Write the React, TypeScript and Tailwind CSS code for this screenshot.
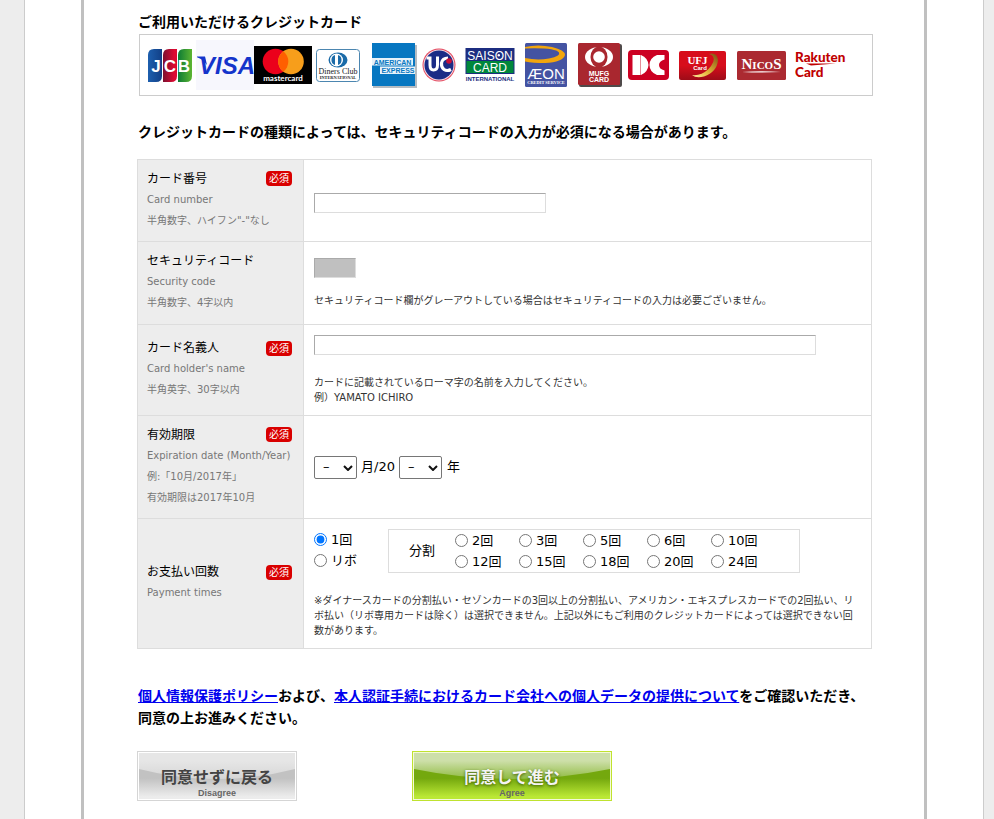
import { useState, type ReactNode } from "react";

const PRIMARY_TIMES = ["1回", "リボ"];

const SPLIT_TIMES = ["2回", "3回", "5回", "6回", "10回", "12回", "15回", "18回", "20回", "24回"];

const MONTHS = ["01", "02", "03", "04", "05", "06", "07", "08", "09", "10", "11", "12"];
const YEARS = ["17", "18", "19", "20", "21", "22", "23", "24", "25", "26"];

export default function App() {
    const [times, setTimes] = useState("1回");

    return (
        <div className="min-h-screen bg-[#ededed] pl-6 pr-[10px] font-['DejaVu_Sans','Noto_Sans_CJK_JP',sans-serif] text-black">
            <div className="border-x border-[#ccc] bg-white px-14">
                <main className="min-h-screen border-x-3 border-[#c0c0c0] pt-3 pb-4 pl-[53px] pr-[51px]">
                    <h2 className="pl-px text-sm leading-5 font-bold">ご利用いただけるクレジットカード</h2>
                    <div className="mt-0.5 ml-0.5">
                        <CardLogos />
                    </div>

                    <p className="mt-[26px] pl-px text-sm leading-5 font-bold">
                        クレジットカードの種類によっては、セキュリティコードの入力が必須になる場合があります。
                    </p>

                    <form className="mt-[17px] pr-px" onSubmit={(e) => e.preventDefault()}>
                        <table className="w-full border-collapse">
                            <tbody>
                                <Row
                                    className="h-[82px]"
                                    htmlFor="card-number"
                                    title="カード番号"
                                    required
                                    notes={["Card number", "半角数字、ハイフン\"-\"なし"]}
                                >
                                    <div className="pt-1">
                                        <TextInput id="card-number" className="w-[232px]" />
                                    </div>
                                </Row>
                                <Row
                                    className="h-[83px]"
                                    htmlFor="security-code"
                                    title="セキュリティコード"
                                    notes={["Security code", "半角数字、4字以内"]}
                                >
                                    <div className="flex flex-col gap-[15px]">
                                        <input
                                            id="security-code"
                                            type="text"
                                            disabled
                                            className="block h-5 w-[42px] border border-t-[#aaa] border-l-[#aaa] border-r-[#ddd] border-b-[#ddd] bg-[#c0c0c0] px-1 text-xs"
                                        />
                                        <p className="text-[10px] leading-[15px] text-[#333]">
                                            セキュリティコード欄がグレーアウトしている場合はセキュリティコードの入力は必要ございません。
                                        </p>
                                    </div>
                                </Row>
                                <Row
                                    className="h-[91px]"
                                    htmlFor="card-holder"
                                    title="カード名義人"
                                    required
                                    notes={["Card holder's name", "半角英字、30字以内"]}
                                >
                                    <div className="flex flex-col gap-5">
                                        <TextInput id="card-holder" className="w-full max-w-[502px]" />
                                        <p className="text-[10px] leading-[15px] text-[#333]">
                                            カードに記載されているローマ字の名前を入力してください。
                                            <br />
                                            例）YAMATO ICHIRO
                                        </p>
                                    </div>
                                </Row>
                                <Row
                                    className="h-[103px]"
                                    htmlFor="exp-month"
                                    title="有効期限"
                                    required
                                    notes={["Expiration date (Month/Year)", "例:「10月/2017年」", "有効期限は2017年10月"]}
                                >
                                    <div className="flex items-center gap-1 text-[13px] leading-5">
                                        <DateSelect id="exp-month" label="月" options={MONTHS} />
                                        <span>月/20</span>
                                        <DateSelect id="exp-year" label="年" options={YEARS} />
                                        <span className="pl-px">年</span>
                                    </div>
                                </Row>
                                <Row className="h-[130px]" title="お支払い回数" required notes={["Payment times"]}>
                                    <div className="flex items-start gap-[31px] text-[13px]">
                                        <div className="flex w-[43px] flex-col">
                                            {PRIMARY_TIMES.map((t) => (
                                                <TimesRadio key={t} value={t} current={times} onChange={setTimes} />
                                            ))}
                                        </div>
                                        <fieldset
                                            aria-label="分割"
                                            className="flex h-11 w-[412px] items-center border border-[#ddd]"
                                        >
                                            <span className="w-[66px] pl-5 leading-5">分割</span>
                                            <div className="grid grid-cols-[repeat(5,64px)]">
                                                {SPLIT_TIMES.map((t) => (
                                                    <TimesRadio key={t} value={t} current={times} onChange={setTimes} />
                                                ))}
                                            </div>
                                        </fieldset>
                                    </div>
                                    <p className="mt-5 text-[10px] leading-[15px] text-[#333]">
                                        ※ダイナースカードの分割払い・セゾンカードの3回以上の分割払い、アメリカン・エキスプレスカードでの2回払い、リボ払い（リボ専用カードは除く）は選択できません。上記以外にもご利用のクレジットカードによっては選択できない回数があります。
                                    </p>
                                </Row>
                            </tbody>
                        </table>

                        <p className="mt-9 pl-px text-sm leading-[22px] font-bold">
                            <a href="#policy" className="text-[#00e] underline">個人情報保護ポリシー</a>
                            および、
                            <a href="#data" className="text-[#00e] underline">
                                本人認証手続におけるカード会社への個人データの提供について
                            </a>
                            をご確認いただき、同意の上お進みください。
                        </p>

                        <div className="mt-[22px] flex gap-[115px]">
                            <button
                                type="button"
                                className="relative h-[50px] w-40 border border-[#d5d5d5] bg-white p-px"
                            >
                                <Gloss id="grey" top="#e6e6e6" middle="#d6d6d6" dark="#c2c2c2" bottom="#ececec" />
                                <span className="relative flex flex-col items-center pt-3.5">
                                    <span className="text-base leading-5 font-bold text-[#444]">同意せずに戻る</span>
                                    <span className="font-['Liberation_Sans',sans-serif] text-[9px] leading-[10px] font-bold text-[#666]">
                                        Disagree
                                    </span>
                                </span>
                            </button>
                            <button
                                type="submit"
                                className="relative h-[50px] w-[200px] border border-[#bfe22f] bg-[#f4fad8] p-px"
                            >
                                <Gloss id="green" top="#cddfa9" middle="#90bb42" dark="#74a80e" bottom="#bbe835" />
                                <span className="relative flex flex-col items-center pt-3.5">
                                    <span className="text-base leading-5 font-bold text-[#f4f4f4] text-shadow-[0_1px_3px_#3d5c00]">
                                        同意して進む
                                    </span>
                                    <span className="font-['Liberation_Sans',sans-serif] text-[9px] leading-[10px] font-bold text-[#666]">
                                        Agree
                                    </span>
                                </span>
                            </button>
                        </div>
                    </form>
                </main>
            </div>
        </div>
    );
}

interface RowProps {
    title: string;
    notes: string[];
    className: string;
    htmlFor?: string;
    required?: boolean;
    children: ReactNode;
}

function Row({ title, notes, className, htmlFor, required, children }: RowProps) {
    return (
        <tr className={className}>
            <th
                scope="row"
                className="w-[166px] border border-[#ddd] bg-[#ededed] pt-1.5 pr-[11px] pb-2 pl-[9px] text-left align-middle font-normal"
            >
                <div className="flex items-center justify-between">
                    {htmlFor ? (
                        <label htmlFor={htmlFor} className="text-xs leading-5">{title}</label>
                    ) : (
                        <span className="text-xs leading-5">{title}</span>
                    )}
                    {required && (
                        <span className="h-[15px] w-[26px] rounded bg-[#d90000] text-center text-[10px] leading-[15px] text-white">
                            必須
                        </span>
                    )}
                </div>
                {notes.map((note) => (
                    <p key={note} className="text-[10px] leading-[21px] whitespace-nowrap text-[#777]">{note}</p>
                ))}
            </th>
            <td className="border border-[#ddd] px-[10px] align-middle">{children}</td>
        </tr>
    );
}

function TextInput({ id, className }: { id: string; className: string }) {
    return (
        <input
            id={id}
            type="text"
            className={`block h-5 border border-t-[#aaa] border-l-[#aaa] border-r-[#ddd] border-b-[#ddd] bg-white px-1 text-xs ${className}`}
        />
    );
}

function DateSelect({ id, label, options }: { id: string; label: string; options: string[] }) {
    return (
        <span className="relative">
            <select
                id={id}
                aria-label={label}
                className="block h-[23px] w-[43px] appearance-none rounded-[2px] border border-[#767676] bg-white pl-2 text-[13px]"
            >
                <option value="">–</option>
                {options.map((o) => (
                    <option key={o} value={o}>{o}</option>
                ))}
            </select>
            <svg className="pointer-events-none absolute top-[9px] right-1" width="10" height="6" viewBox="0 0 10 6">
                <path d="M1 1l4 4 4-4" fill="none" stroke="#111" strokeWidth="2" />
            </svg>
        </span>
    );
}

interface TimesRadioProps {
    value: string;
    current: string;
    onChange: (value: string) => void;
}

function TimesRadio({ value, current, onChange }: TimesRadioProps) {
    return (
        <label className="flex items-center gap-1 leading-[21px] whitespace-nowrap">
            <input
                type="radio"
                name="times"
                value={value}
                checked={current === value}
                onChange={() => onChange(value)}
                className="size-[13px]"
            />
            {value}
        </label>
    );
}

interface GlossProps {
    id: string;
    top: string;
    middle: string;
    dark: string;
    bottom: string;
}

function Gloss({ id, top, middle, dark, bottom }: GlossProps) {
    return (
        <svg className="absolute inset-px h-[46px] w-[calc(100%-2px)]" viewBox="0 0 196 46" preserveAspectRatio="none">
            <defs>
                <linearGradient id={`${id}-base`} x1="0" y1="0" x2="0" y2="1">
                    <stop offset="0.4" stopColor={dark} />
                    <stop offset="0.55" stopColor={dark} />
                    <stop offset="0.95" stopColor={bottom} />
                </linearGradient>
                <linearGradient id={`${id}-shine`} x1="0" y1="0" x2="0" y2="1">
                    <stop offset="0" stopColor={top} />
                    <stop offset="0.3" stopColor={top} />
                    <stop offset="1" stopColor={middle} />
                </linearGradient>
            </defs>
            <rect width="196" height="46" fill={`url(#${id}-base)`} />
            <path d="M0 0H196V16Q98 36 0 16Z" fill={`url(#${id}-shine)`} />
        </svg>
    );
}

function CardLogos() {
    return (
        <div className="flex h-[62px] items-center overflow-hidden border border-[#ccc] pl-2">
            {/* JCB */}
            <svg role="img" aria-label="JCB" className="shrink-0" width="44" height="36" viewBox="0 -2 44 36">
                <defs>
                    <linearGradient id="jcb-b"><stop offset="0" stopColor="#1d5fae" /><stop offset="1" stopColor="#123f86" /></linearGradient>
                    <linearGradient id="jcb-r"><stop offset="0" stopColor="#7c1030" /><stop offset="0.8" stopColor="#dc0a31" /></linearGradient>
                    <linearGradient id="jcb-g"><stop offset="0" stopColor="#0d7b35" /><stop offset="1" stopColor="#5cb531" /></linearGradient>
                </defs>
                <path d="M6 0H14V27Q14 33 8 33H0V6Q0 0 6 0Z" fill="url(#jcb-b)" />
                <path d="M21 0H29V27Q29 33 23 33H15V6Q15 0 21 0Z" fill="url(#jcb-r)" />
                <path d="M36 0H44V27Q44 33 38 33H30V6Q30 0 36 0Z" fill="url(#jcb-g)" />
                <g fontFamily="Liberation Sans" fontWeight="700" fontSize="17" fill="#fff" textAnchor="middle">
                    <text x="8" y="23">J</text>
                    <text x="22" y="23">C</text>
                    <text x="36" y="23">B</text>
                </g>
            </svg>
            {/* Visa */}
            <svg role="img" aria-label="VISA" className="ml-1 shrink-0" width="58" height="50" viewBox="0 0 58 50">
                <rect width="58" height="50" fill="#f7f7fd" />
                <text x="3" y="34" fontFamily="Liberation Sans" fontWeight="700" fontStyle="italic" fontSize="24" fill="#1434cb">VISA</text>
                <path d="M1 16.500H9L11 25Q7 19 1 17.200Z" fill="#1434cb" />
            </svg>
            {/* mastercard */}
            <svg role="img" aria-label="mastercard" className="shrink-0" width="58" height="38" viewBox="0 0 58 38">
                <rect width="58" height="38" fill="#000" />
                <circle cx="21.500" cy="15.500" r="12.800" fill="#eb001b" />
                <circle cx="37" cy="15.500" r="12.800" fill="#f79e1b" />
                <path d="M29.250 5.300A12.800 12.800 0 0 1 29.250 25.700A12.800 12.800 0 0 1 29.250 5.300Z" fill="#ff5f00" />
                <text x="29" y="35" textAnchor="middle" fontFamily="Lato" fontWeight="700" fontSize="8" fill="#fff">mastercard</text>
            </svg>
            {/* Diners Club */}
            <svg role="img" aria-label="Diners Club International" className="ml-1 shrink-0" width="44" height="33" viewBox="0 0 44 33">
                <rect x="0.500" y="0.500" width="43" height="32" rx="3" fill="#fff" stroke="#4c86b0" />
                <ellipse cx="22" cy="11" rx="9.500" ry="7.500" fill="#1b6ba8" />
                <circle cx="20.500" cy="11" r="6.500" fill="#fff" />
                <path d="M19 6A5.300 5.300 0 0 0 19 16ZM22 6A5.300 5.300 0 0 1 22 16Z" fill="#1b6ba8" />
                <text x="22" y="24.500" textAnchor="middle" fontFamily="Liberation Serif" fontSize="8" fill="#222">Diners Club</text>
                <text x="22" y="29.500" textAnchor="middle" fontFamily="Liberation Serif" fontWeight="700" fontSize="4.300" fill="#222">INTERNATIONAL</text>
            </svg>
            {/* American Express */}
            <svg role="img" aria-label="American Express" className="ml-[11px] shrink-0" width="46" height="45" viewBox="0 0 46 45">
                <rect x="2" y="2" width="44" height="43" fill="#b5bcc2" />
                <rect x="1" y="0" width="43" height="43" fill="#0777c1" />
                <rect x="1" y="15" width="41" height="7.500" fill="#e6f2fa" />
                <rect x="9" y="23.500" width="35" height="7.500" fill="#e6f2fa" />
                <text x="21.500" y="21.500" textAnchor="middle" fontFamily="Liberation Sans" fontWeight="700" fontSize="7" fill="#0777c1">AMERICAN</text>
                <text x="27" y="30" textAnchor="middle" fontFamily="Liberation Sans" fontWeight="700" fontSize="7" fill="#0777c1">EXPRESS</text>
            </svg>
            {/* UC */}
            <svg role="img" aria-label="UC" className="ml-[5px] shrink-0" width="34" height="34" viewBox="0 0 34 34">
                <circle cx="17" cy="17" r="16.500" fill="#e4475c" />
                <circle cx="17" cy="17" r="15.500" fill="#f3dbe4" />
                <circle cx="17" cy="17" r="14.500" fill="#1b2c86" />
                <path d="M4.500 10H8V17Q8 22 11.500 22Q15.500 22 15.500 17V8.500" fill="none" stroke="#fff" strokeWidth="3" />
                <path d="M29 21.500Q25 23.500 22 21.500Q19 19.500 19.500 15Q20.500 10 26 10" fill="none" stroke="#fff" strokeWidth="3.200" />
                <circle cx="27" cy="13" r="2.800" fill="#c8103a" />
            </svg>
            {/* Saison */}
            <svg role="img" aria-label="SAISON CARD INTERNATIONAL" className="ml-[9px] shrink-0" width="50" height="34" viewBox="0 0 50 34">
                <rect x="0.500" width="49" height="26" fill="#1c2d80" />
                <rect x="1.500" y="13" width="47" height="12" fill="#00873c" />
                <text x="25" y="11.500" textAnchor="middle" fontFamily="Liberation Sans" fontSize="12" fill="#fff">SAISON</text>
                <circle cx="33.800" cy="7.200" r="1.200" fill="#fff" />
                <text x="25" y="23.500" textAnchor="middle" fontFamily="Liberation Sans" fontSize="12" fill="#fff">CARD</text>
                <text x="25" y="33" textAnchor="middle" fontFamily="Liberation Sans" fontWeight="700" fontSize="6" fill="#1c2d80">INTERNATIONAL</text>
            </svg>
            {/* AEON */}
            <svg role="img" aria-label="AEON CREDIT SERVICE" className="ml-[10px] shrink-0" width="42" height="44" viewBox="0 0 42 44">
                <rect width="42" height="44" rx="1.500" fill="#4453a2" />
                <path d="M0 4Q13 1 27 4Q40 7 40 12Q38 19 20 20Q8 20 0 18.500V15Q12 17.500 24 15.500Q36 13 34 9.500Q30 4.500 0 5.500Z" fill="#f2a60d" />
                <text x="21" y="35.500" textAnchor="middle" fontFamily="Liberation Sans" fontSize="15" fill="#fff">ÆON</text>
                <text x="21" y="41" textAnchor="middle" fontFamily="Liberation Serif" fontWeight="700" fontSize="4.400" fill="#fff">CREDIT SERVICE</text>
            </svg>
            {/* MUFG */}
            <svg role="img" aria-label="MUFG CARD" className="ml-[11px] shrink-0" width="44" height="44" viewBox="0 0 44 44">
                <rect x="1" y="1" width="43" height="43" rx="2" fill="#4f4a4a" />
                <rect width="42" height="42" rx="1.500" fill="#a9272f" />
                <ellipse cx="21" cy="14" rx="14" ry="10" fill="#fff" />
                <ellipse cx="21" cy="14" rx="8.500" ry="10.500" fill="#a9272f" />
                <circle cx="21" cy="14" r="5.800" fill="#fff" />
                <text x="21" y="32.500" textAnchor="middle" fontFamily="Liberation Sans" fontWeight="700" fontSize="7" fill="#fff">MUFG</text>
                <text x="21" y="39" textAnchor="middle" fontFamily="Liberation Sans" fontWeight="700" fontSize="7" fill="#fff">CARD</text>
            </svg>
            {/* DC */}
            <svg role="img" aria-label="DC" className="ml-1.5 shrink-0" width="41" height="30" viewBox="0 0 41 30">
                <rect width="41" height="30" rx="4" fill="#cc0022" />
                <path d="M4.500 5H13Q20 8 20.500 15Q20 22 13 25H4.500Z" fill="#fff" />
                <path d="M12.500 5V25" stroke="#e58c98" strokeWidth="1" />
                <path d="M29 5Q21.500 8 21.500 15Q21.500 22 29 25H36.500V20.500Q31 19 31 15Q31 11 36.500 9.500V5Z" fill="#fff" />
            </svg>
            {/* UFJ */}
            <svg role="img" aria-label="UFJ Card" className="ml-[10px] shrink-0" width="47" height="29" viewBox="0 0 47 29">
                <defs>
                    <linearGradient id="ufj-bg" x1="0" y1="0" x2="0" y2="1"><stop offset="0.500" stopColor="#d70d1b" /><stop offset="1" stopColor="#9d0c18" /></linearGradient>
                    <linearGradient id="ufj-gold" x1="1" y1="0" x2="0" y2="1"><stop offset="0" stopColor="#7d4c10" /><stop offset="0.600" stopColor="#e6b83c" /><stop offset="1" stopColor="#fff0a0" /></linearGradient>
                </defs>
                <rect width="47" height="29" rx="2" fill="url(#ufj-bg)" />
                <path d="M30 3Q38 1 39 9Q38 21 25 25.500Q17 27.500 13 24Q22 25 29 18.500Q37 10 34 5.500Q33 3.500 30 3Z" fill="url(#ufj-gold)" />
                <text x="18.500" y="13" textAnchor="middle" fontFamily="Liberation Serif" fontWeight="700" fontSize="11" fill="#fff">UFJ</text>
                <text x="21" y="18.500" textAnchor="middle" fontFamily="Liberation Sans" fontWeight="700" fontSize="6" fill="#fff">Card</text>
            </svg>
            {/* NICOS */}
            <svg role="img" aria-label="NICOS" className="ml-[11px] shrink-0" width="49" height="29" viewBox="0 0 49 29">
                <rect width="49" height="29" rx="1.500" fill="#ab2a31" />
                <text x="24.500" y="18" textAnchor="middle" fontFamily="Liberation Serif" fontWeight="700" fontSize="15" fill="#fff">
                    N<tspan fontSize="11">ICO</tspan>S
                </text>
                <path d="M5 21Q24 19.500 44 21Q24 22 5 21Z" fill="#fff" />
            </svg>
            {/* Rakuten Card */}
            <svg role="img" aria-label="Rakuten Card" className="ml-[9px] shrink-0" width="56" height="30" viewBox="0 0 56 30">
                <text x="0" y="12" fontFamily="Lato" fontWeight="900" fontSize="13.500" fill="#bf0000">Rakuten</text>
                <path d="M11 13.500H41L16 15.500Z" fill="#bf0000" />
                <text x="0" y="26.500" fontFamily="Lato" fontWeight="900" fontSize="13.500" fill="#bf0000">Card</text>
            </svg>
        </div>
    );
}
